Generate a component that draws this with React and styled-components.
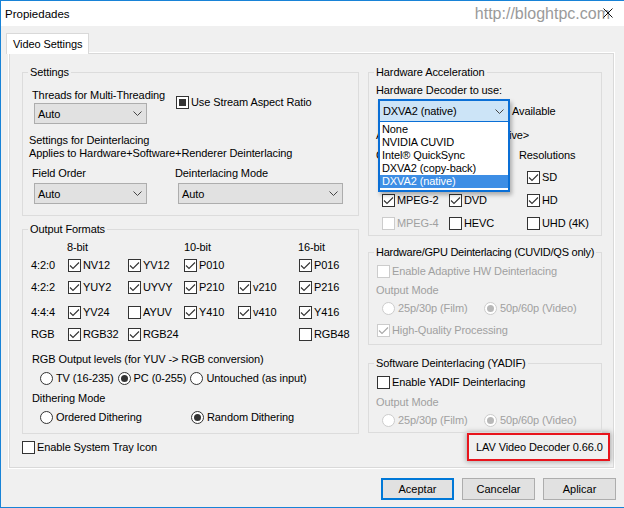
import React from "react";
import styled, { createGlobalStyle } from "styled-components";

const GlobalStyle = createGlobalStyle`
  html, body { margin: 0; padding: 0; background: #ffffff; }
  body {
    font-family: "Liberation Sans", Arial, sans-serif;
    font-size: 11px;
    letter-spacing: -0.1px;
    color: #000000;
  }
  *, *::before, *::after { box-sizing: border-box; }
`;

const Window = styled.div`
  width: 624px;
  height: 508px;
  border-left: 1px solid #1883d7;
  border-top: 1px solid #1883d7;
  border-bottom: 1px solid #1883d7;
  background: #f0f0f0;
  display: flex;
  flex-direction: column;
  overflow: hidden;
`;

const TitleBar = styled.div`
  position: relative;
  flex: none;
  height: 25px;
  display: flex;
  align-items: center;
  padding-left: 4px;
  background: #ffffff;
  font-size: 11.5px;
  letter-spacing: 0;
`;

const Watermark = styled.span`
  margin-left: auto;
  margin-right: 14px;
  font-size: 16px;
  color: #9a9a9a;
`;

const CloseIcon = styled.svg`
  position: absolute;
  right: 11px;
  top: 7px;
`;

const Body = styled.div`
  flex: 1;
  display: flex;
  flex-direction: column;
  padding-top: 7px;
`;

const Tab = styled.div`
  position: relative;
  z-index: 1;
  align-self: flex-start;
  margin-left: 5px;
  margin-bottom: -1px;
  height: 21px;
  padding: 0 6px;
  display: flex;
  align-items: center;
  background: #ffffff;
  border: 1px solid #d9d9d9;
  border-bottom: none;
`;

const Panel = styled.div`
  margin-left: 8px;
  width: 605px;
  height: 415px;
  border: 1px solid #d9d9d9;
  box-shadow: 0 0 0 1px #ffffff;
  background: #f0f0f0;
  padding: 12px 11px 0 12px;
  display: flex;
  align-items: flex-start;
  gap: 9px;
`;

const Column = styled.div`
  width: ${(p) => p.$w}px;
  display: flex;
  flex-direction: column;
`;

const Fieldset = styled.fieldset`
  position: relative;
  margin: 0;
  margin-top: ${(p) => p.$mt || 0}px;
  padding: 0;
  min-width: 0;
  height: ${(p) => p.$h}px;
  border: 1px solid #dcdcdc;
`;

const Legend = styled.legend`
  margin-left: 5px;
  padding: 0 2px;
  font-size: 11px;
  line-height: 13px;
  white-space: nowrap;
  letter-spacing: ${(p) => (p.$tight ? "-0.25px" : "-0.1px")};
`;

const GroupBody = styled.div`
  padding: ${(p) => p.$pt}px 0 0 ${(p) => p.$pl}px;
`;

const Text = styled.div`
  height: 13px;
  line-height: 13px;
  white-space: nowrap;
  margin-left: ${(p) => p.$ml || 0}px;
  margin-top: ${(p) => p.$mt || 0}px;
  color: ${(p) => (p.$disabled ? "#a0a0a0" : "#000000")};
`;

const TwoCol = styled.div`
  display: grid;
  grid-template-columns: ${(p) => p.$cols};
  align-items: start;
  margin-top: ${(p) => p.$mt || 0}px;
`;

const Field = styled.div`
  display: flex;
  flex-direction: column;
  align-items: flex-start;
`;

const ComboBox = styled.div`
  width: ${(p) => p.$w}px;
  height: 21px;
  margin-left: ${(p) => p.$ml || 0}px;
  margin-top: ${(p) => p.$mt || 0}px;
  padding-left: 3px;
  display: flex;
  align-items: center;
  background: #e1e1e1;
  border: 1px solid #adadad;
`;

const Chevron = styled.svg`
  margin-left: auto;
  margin-right: 4px;
`;

const CheckRow = styled.label`
  display: flex;
  align-items: center;
  gap: 2px;
  height: 13px;
  line-height: 13px;
  white-space: nowrap;
  margin-left: ${(p) => p.$ml || 0}px;
  margin-top: ${(p) => p.$mt || 0}px;
  color: ${(p) => (p.$disabled ? "#a0a0a0" : "#000000")};
`;

const Box = styled.span`
  flex: none;
  width: 13px;
  height: 13px;
  display: flex;
  align-items: center;
  justify-content: center;
  background: #ffffff;
  border: 1px solid ${(p) => (p.$disabled ? "#cccccc" : "#333333")};
`;

const MixedMark = styled.span`
  width: 7px;
  height: 7px;
  background: #333333;
`;

const RadioDot = styled.span`
  flex: none;
  width: 13px;
  height: 13px;
  border-radius: 50%;
  display: flex;
  align-items: center;
  justify-content: center;
  background: #ffffff;
  border: 1px solid ${(p) => (p.$disabled ? "#cccccc" : "#333333")};
  &::after {
    content: "";
    display: ${(p) => (p.$on ? "block" : "none")};
    width: 7px;
    height: 7px;
    border-radius: 50%;
    background: ${(p) => (p.$disabled ? "#b8b8b8" : "#333333")};
  }
`;

const RadioRow = styled.div`
  display: flex;
  gap: 4px;
  margin-left: ${(p) => p.$ml || 0}px;
  margin-top: ${(p) => p.$mt || 0}px;
`;

const RadioItem = styled.label`
  display: flex;
  align-items: center;
  gap: 3px;
  height: 13px;
  line-height: 13px;
  white-space: nowrap;
  width: ${(p) => (p.$w ? `${p.$w}px` : "auto")};
  color: ${(p) => (p.$disabled ? "#a0a0a0" : "#000000")};
`;

const FormatGrid = styled.div`
  display: grid;
  grid-template-columns: 37px 60px 56px 54px 61px 1fr;
  grid-template-rows: 18px 22px 25px 22px 13px;
  align-items: start;
`;

const ComboWrap = styled.div`
  position: relative;
  display: flex;
  align-items: center;
  gap: 2px;
  margin-left: 2px;
  margin-top: 3px;
`;

const DropFrame = styled.div`
  position: absolute;
  left: 0;
  top: -1px;
  width: 132px;
  border: 2px solid #0a6fd6;
  background: #ffffff;
  box-shadow: 2px 3px 4px rgba(0, 0, 0, 0.28);
  z-index: 2;
`;

const DropFace = styled.div`
  height: 21px;
  padding-left: 3px;
  display: flex;
  align-items: center;
  background: #cce4f7;
  border-bottom: 1px solid #0a6fd6;
`;

const DropList = styled.div`
  padding: 1px 0 2px;
`;

const DropItem = styled.div`
  height: 13px;
  line-height: 13px;
  padding-left: 2px;
  white-space: nowrap;
  background: ${(p) => (p.$selected ? "#3d8ee5" : "transparent")};
  color: ${(p) => (p.$selected ? "#ffffff" : "#000000")};
`;

const StatusRow = styled.div`
  display: grid;
  grid-template-columns: ${(p) => p.$cols};
  margin-top: ${(p) => p.$mt}px;
`;

const CodecGrid = styled.div`
  display: grid;
  grid-template-columns: 67px 78px 1fr;
  grid-auto-rows: 23px;
  margin-left: 6px;
  margin-top: 9px;
`;

const VersionTag = styled.div`
  align-self: flex-end;
  margin-right: -8px;
  width: 143px;
  height: 28px;
  padding-left: 7px;
  display: flex;
  align-items: center;
  white-space: nowrap;
  border: 2px solid #e8141c;
  box-shadow: 0 0 5px 1px rgba(0, 0, 0, 0.3);
  background: #f0f0f0;
`;

const ButtonRow = styled.div`
  display: flex;
  justify-content: flex-end;
  gap: 8px;
  margin-top: 10px;
  padding-right: 8px;
`;

const Button = styled.button`
  width: 73px;
  height: 22px;
  padding: 0;
  font-family: inherit;
  font-size: 11px;
  color: #000000;
  background: #e1e1e1;
  border: ${(p) => (p.$primary ? "2px solid #0078d7" : "1px solid #adadad")};
`;

function ChevronIcon() {
  return (
    <Chevron width="9" height="5" viewBox="0 0 9 5">
      <polyline points="0.5,0.5 4.5,4.5 8.5,0.5" fill="none" stroke="#444" strokeWidth="1" />
    </Chevron>
  );
}

function Combo({ w, ml, mt, children }) {
  return (
    <ComboBox $w={w} $ml={ml} $mt={mt}>
      {children}
      <ChevronIcon />
    </ComboBox>
  );
}

function Check({ on, mixed, disabled, ml, mt, children }) {
  return (
    <CheckRow $disabled={disabled} $ml={ml} $mt={mt}>
      <Box $disabled={disabled}>
        {on && (
          <svg width="11" height="11" viewBox="0 0 11 11">
            <polyline
              points="1,5.5 4,8.5 10,2.5"
              fill="none"
              stroke={disabled ? "#a8a8a8" : "#333"}
              strokeWidth="1.1"
            />
          </svg>
        )}
        {mixed && <MixedMark />}
      </Box>
      {children}
    </CheckRow>
  );
}

function Radio({ on, disabled, w, children }) {
  return (
    <RadioItem $disabled={disabled} $w={w}>
      <RadioDot $on={on} $disabled={disabled} />
      {children}
    </RadioItem>
  );
}

function Group({ title, tight, h, mt, pt, pl, children }) {
  return (
    <Fieldset $h={h} $mt={mt}>
      <Legend $tight={tight}>{title}</Legend>
      <GroupBody $pt={pt} $pl={pl}>
        {children}
      </GroupBody>
    </Fieldset>
  );
}

const formats = [
  ["4:2:0", ["NV12", true], ["YV12", true], ["P010", true], null, ["P016", true]],
  ["4:2:2", ["YUY2", true], ["UYVY", true], ["P210", true], ["v210", true], ["P216", true]],
  ["4:4:4", ["YV24", true], ["AYUV", false], ["Y410", true], ["v410", true], ["Y416", true]],
  ["RGB", ["RGB32", true], ["RGB24", true], null, null, ["RGB48", false]],
];

const decoders = ["None", "NVIDIA CUVID", "Intel\u00AE QuickSync", "DXVA2 (copy-back)", "DXVA2 (native)"];

export default function App() {
  return (
    <>
      <GlobalStyle />
      <Window>
        <TitleBar>
          <span>Propiedades</span>
          <Watermark>http://bloghtpc.com</Watermark>
          <CloseIcon width="10" height="10" viewBox="0 0 10 10">
            <path d="M0.5 0.5 L9.5 9.5 M9.5 0.5 L0.5 9.5" stroke="#111" strokeWidth="1" />
          </CloseIcon>
        </TitleBar>
        <Body>
          <Tab>Video Settings</Tab>
          <Panel>
            <Column $w={337}>
              <Group title="Settings" h={150} pt={10} pl={9}>
                <TwoCol $cols="143px 1fr">
                  <Field>
                    <Text>Threads for Multi-Threading</Text>
                    <Combo w={113} ml={2} mt={1}>Auto</Combo>
                  </Field>
                  <Check mixed ml={1} mt={7}>Use Stream Aspect Ratio</Check>
                </TwoCol>
                <Text $ml={-3} $mt={10}>Settings for Deinterlacing</Text>
                <Text $ml={-3}>Applies to Hardware+Software+Renderer Deinterlacing</Text>
                <TwoCol $cols="143px 1fr" $mt={7}>
                  <Field>
                    <Text>Field Order</Text>
                    <Combo w={113} ml={2} mt={3}>Auto</Combo>
                  </Field>
                  <Field>
                    <Text>Deinterlacing Mode</Text>
                    <Combo w={165} ml={3} mt={3}>Auto</Combo>
                  </Field>
                </TwoCol>
              </Group>

              <Group title="Output Formats" h={211} mt={7} pt={5} pl={8}>
                <FormatGrid>
                  <span />
                  <Text $ml={-1}>8-bit</Text>
                  <span />
                  <Text>10-bit</Text>
                  <span />
                  <Text $ml={-1}>16-bit</Text>
                  {formats.map((row) => (
                    <React.Fragment key={row[0]}>
                      <Text>{row[0]}</Text>
                      {row.slice(1).map((cell, i) =>
                        cell ? (
                          <Check key={i} on={cell[1]}>{cell[0]}</Check>
                        ) : (
                          <span key={i} />
                        )
                      )}
                    </React.Fragment>
                  ))}
                </FormatGrid>
                <Text $ml={1} $mt={12}>RGB Output levels (for YUV -&gt; RGB conversion)</Text>
                <RadioRow $ml={9} $mt={6}>
                  <Radio>TV (16-235)</Radio>
                  <Radio on>PC (0-255)</Radio>
                  <Radio>Untouched (as input)</Radio>
                </RadioRow>
                <Text $ml={1} $mt={7}>Dithering Mode</Text>
                <RadioRow $ml={9} $mt={6}>
                  <Radio w={147}>Ordered Dithering</Radio>
                  <Radio on>Random Dithering</Radio>
                </RadioRow>
              </Group>

              <Check mt={7}>Enable System Tray Icon</Check>
            </Column>

            <Column $w={234}>
              <Group title="Hardware Acceleration" h={170} pt={5} pl={7}>
                <Text>Hardware Decoder to use:</Text>
                <ComboWrap>
                  <Combo w={132}>DXVA2 (native)</Combo>
                  <span>Available</span>
                  <DropFrame>
                    <DropFace>
                      DXVA2 (native)
                      <ChevronIcon />
                    </DropFace>
                    <DropList>
                      {decoders.map((d, i) => (
                        <DropItem key={d} $selected={i === decoders.length - 1}>
                          {d}
                        </DropItem>
                      ))}
                    </DropList>
                  </DropFrame>
                </ComboWrap>
                <StatusRow $cols="104px 1fr" $mt={8}>
                  <Text>Active Decoder:</Text>
                  <Text>&lt;inactive&gt;</Text>
                </StatusRow>
                <StatusRow $cols="143px 1fr" $mt={7}>
                  <Text>Codecs</Text>
                  <Text>Resolutions</Text>
                </StatusRow>
                <CodecGrid>
                  <Check on>H.264</Check>
                  <Check on>VC-1</Check>
                  <Check on>SD</Check>
                  <Check on>MPEG-2</Check>
                  <Check on>DVD</Check>
                  <Check on>HD</Check>
                  <Check disabled>MPEG-4</Check>
                  <Check>HEVC</Check>
                  <Check>UHD (4K)</Check>
                </CodecGrid>
              </Group>

              <Group title="Hardware/GPU Deinterlacing (CUVID/QS only)" tight h={99} mt={10} pt={6} pl={8}>
                <Check disabled>Enable Adaptive HW Deinterlacing</Check>
                <Text $disabled $ml={-1} $mt={6}>Output Mode</Text>
                <RadioRow $ml={5} $mt={5}>
                  <Radio disabled w={98}>25p/30p (Film)</Radio>
                  <Radio disabled on>50p/60p (Video)</Radio>
                </RadioRow>
                <Check disabled on mt={9}>High-Quality Processing</Check>
              </Group>

              <Group title="Software Deinterlacing (YADIF)" h={76} mt={12} pt={6} pl={8}>
                <Check>Enable YADIF Deinterlacing</Check>
                <Text $disabled $ml={-1} $mt={7}>Output Mode</Text>
                <RadioRow $ml={5} $mt={5}>
                  <Radio disabled w={98}>25p/30p (Film)</Radio>
                  <Radio disabled on>50p/60p (Video)</Radio>
                </RadioRow>
              </Group>

              <VersionTag>LAV Video Decoder 0.66.0</VersionTag>
            </Column>
          </Panel>
          <ButtonRow>
            <Button $primary>Aceptar</Button>
            <Button>Cancelar</Button>
            <Button>Aplicar</Button>
          </ButtonRow>
        </Body>
      </Window>
    </>
  );
}
